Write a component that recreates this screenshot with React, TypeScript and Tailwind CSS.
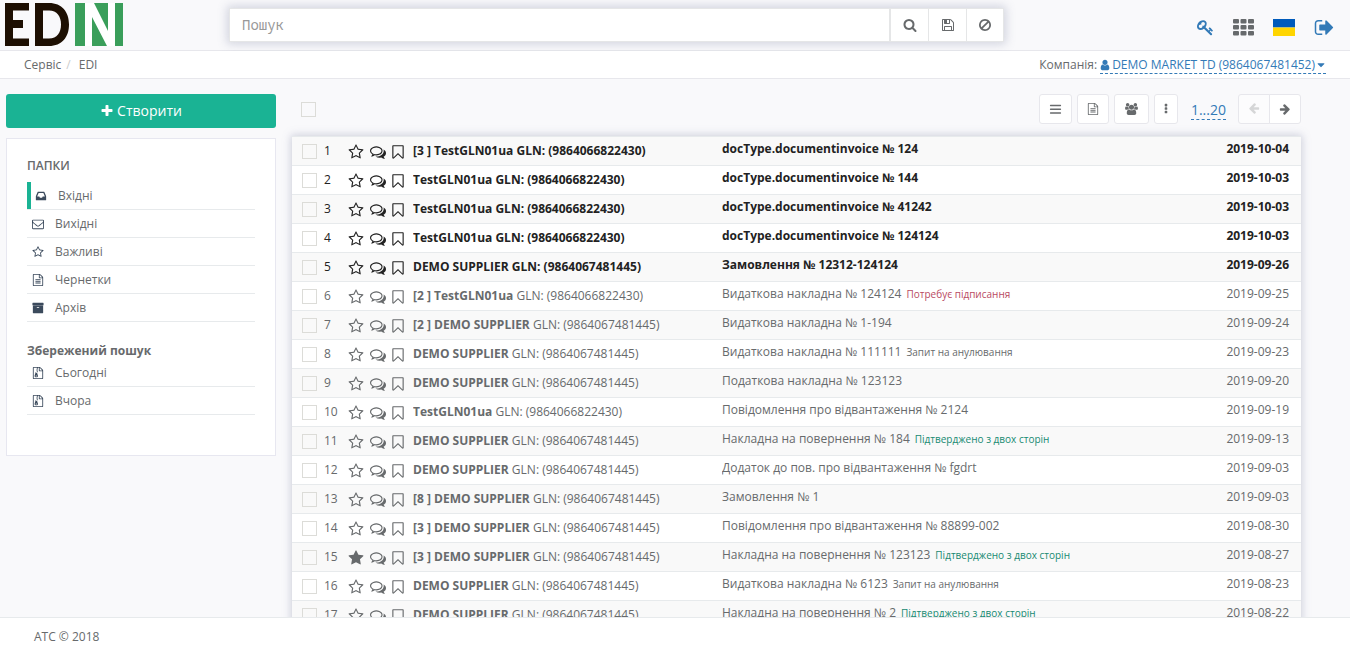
import React from 'react';

const ICONS: Record<string, string> = {
  star: 'M1728 647q0 22-26 48l-363 354 86 500q1 7 1 20 0 21-10.5 35.5t-30.5 14.5q-19 0-40-12l-449-236-449 236q-22 12-40 12-21 0-31.5-14.5t-10.5-35.5q0-6 2-20l86-500-364-354q-25-27-25-48 0-37 56-46l502-73 225-455q19-41 49-41t49 41l225 455 502 73q56 9 56 46z',
  starO: 'M1201 1004l306-297-422-62-189-382-189 382-422 62 306 297-73 421 378-199 377 199zM1728 647q0 22-26 48l-363 354 86 500q1 7 1 20 0 50-41 50-19 0-40-12l-449-236-449 236q-22 12-40 12-21 0-31.5-14.5t-10.5-35.5q0-6 2-20l86-500-364-354q-25-27-25-48 0-37 56-46l502-73 225-455q19-41 49-41t49 41l225 455 502 73q56 9 56 46z',
  comments: 'M704 384q-153 0-286 52t-211.5 141-78.5 191q0 82 53 158t149 132l97 56-35 84q34-20 62-39l44-31 53 10q78 14 153 14 153 0 286-52t211.5-141 78.5-191-78.5-191-211.5-141-286-52zm0-128q191 0 353.5 68.5t256.5 186.5 94 257-94 257-256.5 186.5-353.5 68.5q-86 0-176-16-124 88-278 128-36 9-86 16h-3q-11 0-20.5-8t-11.5-21q-1-3-1-6.5t.5-6.5 2-6l2.5-5 3.5-5.5 4-5 4.5-5 4-4.5q5-6 23-25t26-29.5 22.5-29 25-38.5 20.5-44q-124-72-195-177t-71-224q0-139 94-257t256.5-186.5 353.5-68.5zm822 1169q10 24 20.5 44t25 38.5 22.5 29 26 29.5 23 25q1 1 4 4.5t4.5 5 4 5 3.5 5.5l2.5 5 2 6 .5 6.5-1 6.5q-3 14-13 22t-22 7q-50-7-86-16-154-40-278-128-90 16-176 16-271 0-472-132 58 4 88 4 161 0 309-45t264-129q125-92 192-212t67-254q0-77-23-152 129 71 204 178t75 230q0 120-71 224.5t-195 176.5z',
  bookmark: 'M1408 256h-1024v1242l423-406 89-85 89 85 423 406v-1242zm12-128q23 0 44 9 33 13 52.5 41t19.5 62v1289q0 34-19.5 62t-52.5 41q-19 8-44 8-48 0-83-32l-441-424-441 424q-36 33-83 33-23 0-44-9-33-13-52.5-41t-19.5-62v-1289q0-34 19.5-62t52.5-41q21-9 44-9h1048z',
  search: 'M1216 832q0-185-131.5-316.5t-316.5-131.5-316.5 131.5-131.5 316.5 131.5 316.5 316.5 131.5 316.5-131.5 131.5-316.5zm512 832q0 52-38 90t-90 38q-54 0-90-38l-343-342q-179 124-399 124-143 0-273.5-55.5t-225-150-150-225-55.5-273.5 55.5-273.5 150-225 225-150 273.5-55.5 273.5 55.5 225 150 150 225 55.5 273.5q0 220-124 399l343 343q37 37 37 90z',
  floppy: 'M512 1536h768v-384h-768v384zm896 0h128v-896q0-14-10-38.5t-20-34.5l-281-281q-10-10-34-20t-39-10v416q0 40-28 68t-68 28h-576q-40 0-68-28t-28-68v-416h-128v1280h128v-416q0-40 28-68t68-28h832q40 0 68 28t28 68v416zm-384-928v-320q0-13-9.5-22.5t-22.5-9.5h-192q-13 0-22.5 9.5t-9.5 22.5v320q0 13 9.5 22.5t22.5 9.5h192q13 0 22.5-9.5t9.5-22.5zm640 32v928q0 40-28 68t-68 28h-1344q-40 0-68-28t-28-68v-1344q0-40 28-68t68-28h928q40 0 88 20t76 48l280 280q28 28 48 76t20 88z',
  ban: 'M1440 893q0-161-87-295l-754 753q137 89 297 89 111 0 211.5-43.5t173.5-116.5 116-174.5 43-212.5zm-999 299l755-754q-135-91-300-91-148 0-273 73t-198 199-73 274q0 162 89 299zm1223-299q0 157-61 300t-163.5 246-245 164-298.5 61-298.5-61-245-164-163.5-246-61-300 61-299.5 163.5-245.5 245-164 298.5-61 298.5 61 245 164 163.5 245.5 61 299.5z',
  key: 'M832 512q0-80-56-136t-136-56-136 56-56 136q0 42 19 83-41-19-83-19-80 0-136 56t-56 136 56 136 136 56 136-56 56-136q0-42-19-83 41 19 83 19 80 0 136-56t56-136zm851 704q0 17-49 66t-66 49q-9 0-28.5-16t-36.5-33-38.5-40-24.5-26l-96 96 220 220q28 28 28 68 0 42-39 81t-81 39q-40 0-68-28l-671-671q-176 131-365 131-163 0-265.5-102.5t-102.5-265.5q0-160 95-313t248-248 313-95q163 0 265.5 102.5t102.5 265.5q0 189-131 365l355 355 96-96q-3-3-26-24.5t-40-38.5-33-36.5-16-28.5q0-17 49-66t66-49q13 0 23 10 6 6 46 44.5t82 79.5 86.5 86 73 78 28.5 41z',
  signOut: 'M704 1440q0 4 1 20t.5 26.5-3 23.5-10 19.5-20.5 6.5h-320q-119 0-203.5-84.5t-84.5-203.5v-704q0-119 84.5-203.5t203.5-84.5h320q13 0 22.5 9.5t9.5 22.5q0 4 1 20t.5 26.5-3 23.5-10 19.5-20.5 6.5h-320q-66 0-113 47t-47 113v704q0 66 47 113t113 47h312l11.5 1 11.5 3 8 5.5 7 9 2 13.5zm928-544q0 26-19 45l-544 544q-19 19-45 19t-45-19-19-45v-288h-448q-26 0-45-19t-19-45v-384q0-26 19-45t45-19h448v-288q0-26 19-45t45-19 45 19l544 544q19 19 19 45z',
  user: 'M1536 1399q0 109-62.5 187t-150.5 78h-854q-88 0-150.5-78t-62.5-187q0-85 8.5-160.5t31.5-152 58.5-131 94-89 134.5-34.5q131 128 313 128t313-128q76 0 134.5 34.5t94 89 58.5 131 31.5 152 8.5 160.5zm-256-887q0 159-112.5 271.5t-271.5 112.5-271.5-112.5-112.5-271.5 112.5-271.5 271.5-112.5 271.5 112.5 112.5 271.5z',
  caret: 'M1408 704q0 26-19 45l-448 448q-19 19-45 19t-45-19l-448-448q-19-19-19-45t19-45 45-19h896q26 0 45 19t19 45z',
  plus: 'M1600 736v192q0 40-28 68t-68 28h-416v416q0 40-28 68t-68 28h-192q-40 0-68-28t-28-68v-416h-416q-40 0-68-28t-28-68v-192q0-40 28-68t68-28h416v-416q0-40 28-68t68-28h192q40 0 68 28t28 68v416h416q40 0 68 28t28 68z',
  inbox: 'M1151 960h316q-1-3-2.5-8t-2.5-8l-212-496h-708l-212 496q-1 2-2.5 8t-2.5 8h316l95 192h320zm513 30v482q0 26-19 45t-45 19h-1408q-26 0-45-19t-19-45v-482q0-62 25-123l238-552q10-25 36.5-42t52.5-17h832q26 0 52.5 17t36.5 42l238 552q25 61 25 123z',
  envelope: 'M1664 1504v-768q-32 36-69 66-268 206-426 338-51 43-83 67t-86.5 48.5-102.5 24.5h-2q-48 0-102.5-24.5t-86.5-48.5-83-67q-158-132-426-338-37-30-69-66v768q0 13 9.5 22.5t22.5 9.5h1472q13 0 22.5-9.5t9.5-22.5zm0-1051v-24.5l-.5-13-3-12.5-5.5-9-9-7.5-14-2.5h-1472q-13 0-22.5 9.5t-9.5 22.5q0 168 147 284 193 152 401 317 6 5 35 29.5t46 37.5 44.5 31.5 50.5 27.5 43 9h2q20 0 43-9t50.5-27.5 44.5-31.5 46-37.5 35-29.5q208-165 401-317 54-43 100.5-115.5t46.5-131.5zm128-37v1088q0 66-47 113t-113 47h-1472q-66 0-113-47t-47-113v-1088q0-66 47-113t113-47h1472q66 0 113 47t47 113z',
  fileText: 'M1596 380q28 28 48 76t20 88v1152q0 40-28 68t-68 28h-1344q-40 0-68-28t-28-68v-1600q0-40 28-68t68-28h896q40 0 88 20t76 48zm-444-244v376h376q-10-29-22-41l-313-313q-12-12-41-22zm384 1528v-1024h-416q-40 0-68-28t-28-68v-416h-768v1536h1280zM512 768h768v128h-768zM512 1024h768v128h-768zM512 1280h768v128h-768z',
  fileZip: 'M1596 380q28 28 48 76t20 88v1152q0 40-28 68t-68 28h-1344q-40 0-68-28t-28-68v-1600q0-40 28-68t68-28h896q40 0 88 20t76 48zm-444-244v376h376q-10-29-22-41l-313-313q-12-12-41-22zm384 1528v-1024h-416q-40 0-68-28t-28-68v-416h-128v128h-128v-128h-512v1536h1280zM640 256h128v128h-128zM768 384h128v128h-128zM640 512h128v128h-128zM768 640h128v128h-128zM781 943l107 349q8 27 8 52 0 83-72.500 137.500t-183.500 54.500-183.500-54.500-72.500-137.500q0-25 8-52 21-63 120-396v-128h128v128h79q22 0 39 13t23 34zm-141 465q53 0 90.500-19t37.500-45-37.500-45-90.500-19-90.500 19-37.500 45 37.500 45 90.500 19z',
  archive: 'M1088 832q0-26-19-45t-45-19h-256q-26 0-45 19t-19 45 19 45 45 19h256q26 0 45-19t19-45zm576-192v960q0 26-19 45t-45 19h-1408q-26 0-45-19t-19-45v-960q0-26 19-45t45-19h1408q26 0 45 19t19 45zm64-448v256q0 26-19 45t-45 19h-1536q-26 0-45-19t-19-45v-256q0-26 19-45t45-19h1536q26 0 45 19t19 45z',
  users: 'M593 896q-162 5-265 128h-134q-82 0-138-40.5t-56-118.5q0-353 124-353 6 0 43.5 21t97.5 42.5 119 21.5q67 0 133-23-5 37-5 66 0 139 81 256zm1071 637q0 120-73 189.5t-194 69.5h-874q-121 0-194-69.5t-73-189.5q0-53 3.5-103.5t14-109 26.5-108.5 43-97.5 62-81 85.5-53.5 111.5-20q10 0 43 21.5t73 48 107 48 135 21.5 135-21.5 107-48 73-48 43-21.5q61 0 111.5 20t85.5 53.5 62 81 43 97.5 26.5 108.5 14 109 3.5 103.5zm-1024-1277q0 106-75 181t-181 75-181-75-75-181 75-181 181-75 181 75 75 181zm704 384q0 159-112.5 271.5t-271.5 112.5-271.5-112.5-112.5-271.5 112.5-271.5 271.5-112.5 271.5 112.5 112.5 271.5zm576 225q0 78-56 118.5t-138 40.5h-134q-103-123-265-128 81-117 81-256 0-29-5-66 66 23 133 23 59 0 119-21.5t97.5-42.5 43.5-21q124 0 124 353zm-128-609q0 106-75 181t-181 75-181-75-75-181 75-181 181-75 181 75 75 181z',
  bars: 'M128 1344q0-64 64-64h1408q64 0 64 64v64q0 64-64 64h-1408q-64 0-64-64zM128 832q0-64 64-64h1408q64 0 64 64v64q0 64-64 64h-1408q-64 0-64-64zM128 320q0-64 64-64h1408q64 0 64 64v64q0 64-64 64h-1408q-64 0-64-64z',
  dots: 'M704 1248q0-96 96-96h192q96 0 96 96v192q0 96-96 96h-192q-96 0-96-96zM704 736q0-96 96-96h192q96 0 96 96v192q0 96-96 96h-192q-96 0-96-96zM704 224q0-96 96-96h192q96 0 96 96v192q0 96-96 96h-192q-96 0-96-96z',
  arrow: 'M1600 960q0 54-37 91l-651 651q-39 37-91 37-51 0-90-37l-75-75q-38-38-38-91t38-91l293-293h-704q-52 0-84.5-37.500t-32.500-90.500v-128q0-53 32.500-90.500t84.500-37.500h704l-293-294q-38-36-38-90t38-90l75-75q38-38 90-38 53 0 91 38l651 651q37 35 37 90z',
};

function Icon({ name, className = 'size-3.5' }: { name: string; className?: string }) {
  return (
    <svg viewBox={name === 'users' ? '0 0 1920 1792' : '0 0 1792 1792'} fill="currentColor" aria-hidden="true" className={`shrink-0 ${className}`}>
      <path d={ICONS[name]} />
    </svg>
  );
}

function GridIcon() {
  const cells = [0, 1, 2].flatMap((r) => [0, 1, 2].map((c) => ({ r, c })));
  return (
    <svg viewBox="0 0 21 17" fill="currentColor" aria-hidden="true" className="h-[17px] w-[21px]">
      {cells.map(({ r, c }) => (
        <rect key={`${r}${c}`} x={c * 7.5} y={r * 6} width="6" height="4.600" rx="1" />
      ))}
    </svg>
  );
}

function Logo() {
  return (
    <svg viewBox="0 0 119 43" className="h-[43px] w-[119px]" role="img" aria-label="EDIN">
      <path fill="#1d0f02" d="M0 0h24v7.500H8v9.500h10v8H8v10.500h16V43H0z" />
      <path fill="#1d0f02" fillRule="evenodd" d="M30 0h14c13 0 20 9 20 21.500S57 43 44 43H30zm8 7.500v28h6c8 0 12-6 12-14S52 7.500 44 7.500z" />
      <path fill="#3a9e5a" d="M70 0h48v43H70z" />
      <path fill="#fff" d="M80 0h9l14 28V0h7v43h-8L87 14v29h-7z" />
    </svg>
  );
}

type Row = {
  count?: number;
  name: string;
  gln: string;
  doc: string;
  status?: string;
  tone?: 'red' | 'gray' | 'green';
  date: string;
  unread?: boolean;
  starred?: boolean;
};

const A = '9864066822430';
const B = '9864067481445';

const ROWS: Row[] = [
  { count: 3, name: 'TestGLN01ua', gln: A, doc: 'docType.documentinvoice № 124', date: '2019-10-04', unread: true },
  { name: 'TestGLN01ua', gln: A, doc: 'docType.documentinvoice № 144', date: '2019-10-03', unread: true },
  { name: 'TestGLN01ua', gln: A, doc: 'docType.documentinvoice № 41242', date: '2019-10-03', unread: true },
  { name: 'TestGLN01ua', gln: A, doc: 'docType.documentinvoice № 124124', date: '2019-10-03', unread: true },
  { name: 'DEMO SUPPLIER', gln: B, doc: 'Замовлення № 12312-124124', date: '2019-09-26', unread: true },
  { count: 2, name: 'TestGLN01ua', gln: A, doc: 'Видаткова накладна № 124124', status: 'Потребує підписання', tone: 'red', date: '2019-09-25' },
  { count: 2, name: 'DEMO SUPPLIER', gln: B, doc: 'Видаткова накладна № 1-194', date: '2019-09-24' },
  { name: 'DEMO SUPPLIER', gln: B, doc: 'Видаткова накладна № 111111', status: 'Запит на анулювання', tone: 'gray', date: '2019-09-23' },
  { name: 'DEMO SUPPLIER', gln: B, doc: 'Податкова накладна № 123123', date: '2019-09-20' },
  { name: 'TestGLN01ua', gln: A, doc: 'Повідомлення про відвантаження № 2124', date: '2019-09-19' },
  { name: 'DEMO SUPPLIER', gln: B, doc: 'Накладна на повернення № 184', status: 'Підтверджено з двох сторін', tone: 'green', date: '2019-09-13' },
  { name: 'DEMO SUPPLIER', gln: B, doc: 'Додаток до пов. про відвантаження № fgdrt', date: '2019-09-03' },
  { count: 8, name: 'DEMO SUPPLIER', gln: B, doc: 'Замовлення № 1', date: '2019-09-03' },
  { count: 3, name: 'DEMO SUPPLIER', gln: B, doc: 'Повідомлення про відвантаження № 88899-002', date: '2019-08-30' },
  { count: 3, name: 'DEMO SUPPLIER', gln: B, doc: 'Накладна на повернення № 123123', status: 'Підтверджено з двох сторін', tone: 'green', date: '2019-08-27', starred: true },
  { name: 'DEMO SUPPLIER', gln: B, doc: 'Видаткова накладна № 6123', status: 'Запит на анулювання', tone: 'gray', date: '2019-08-23' },
  { name: 'DEMO SUPPLIER', gln: B, doc: 'Накладна на повернення № 2', status: 'Підтверджено з двох сторін', tone: 'green', date: '2019-08-22' },
];

const TONES = { red: 'text-[#b94a62]', gray: 'text-[#676a6c]', green: 'text-[#178a72]' };

const FOLDERS = [
  { icon: 'inbox', label: 'Вхідні', active: true },
  { icon: 'envelope', label: 'Вихідні' },
  { icon: 'starO', label: 'Важливі' },
  { icon: 'fileText', label: 'Чернетки' },
  { icon: 'archive', label: 'Архів' },
];

const SEARCHES = [
  { icon: 'fileZip', label: 'Сьогодні' },
  { icon: 'fileZip', label: 'Вчора' },
];

const CHECKBOX = 'block size-[15px] shrink-0 appearance-none border border-[#dcdcd8] bg-transparent checked:bg-[#1ab394]';
const TOOL = 'flex h-[30px] items-center justify-center rounded-[3px] border border-[#e7e7ec] bg-white';

function NavItem({ icon, label, active }: { icon: string; label: string; active?: boolean }) {
  return (
    <li className="border-b border-[#e7eaec]">
      <a href="#" className={`flex h-[27px] items-center gap-[11px] ${active ? 'border-l-4 border-[#1ab394] pl-1' : 'pl-[5px]'}`}>
        <Icon name={icon} className="size-3 text-[#3b4a5c]" />
        {label}
      </a>
    </li>
  );
}

function Sidebar() {
  return (
    <aside className="w-[270px] shrink-0">
      <button type="button" className="flex h-[34px] w-full items-center justify-center gap-[3px] rounded-[3px] bg-[#1ab394] text-sm text-white">
        <Icon name="plus" />
        Створити
      </button>
      <nav className="mt-2.5 border border-[#e7e7f0] bg-white px-5 pt-[18px] pb-10">
        <h2 className="leading-[18px] font-semibold">ПАПКИ</h2>
        <ul className="mt-[7px]">
          {FOLDERS.map((f) => (
            <NavItem key={f.label} {...f} />
          ))}
        </ul>
        <h2 className="mt-5 leading-[17px] font-bold">Збережений пошук</h2>
        <ul>
          {SEARCHES.map((f) => (
            <NavItem key={f.label} {...f} />
          ))}
        </ul>
      </nav>
    </aside>
  );
}

function Toolbar() {
  return (
    <div className="flex h-[30px] items-center">
      <input type="checkbox" aria-label="Вибрати все" className={`${CHECKBOX} ml-[9px]`} />
      <div className="ml-auto flex items-center gap-[5px]">
        <button type="button" aria-label="Список" className={`${TOOL} w-[33px]`}><Icon name="bars" className="size-[13px]" /></button>
        <button type="button" aria-label="Документ" className={`${TOOL} w-8`}><Icon name="fileText" className="size-3" /></button>
        <button type="button" aria-label="Користувачі" className={`${TOOL} w-[35px]`}><Icon name="users" className="h-3 w-[13px]" /></button>
        <button type="button" aria-label="Більше" className={`${TOOL} w-6`}><Icon name="dots" className="size-3" /></button>
      </div>
      <a href="#" className="ml-[13px] border-b border-dashed border-[#337ab7] pt-0.5 text-sm leading-[18px] text-[#337ab7]">1...20</a>
      <div className="ml-3 flex">
        <button type="button" disabled aria-label="Назад" className="flex h-[30px] w-8 items-center justify-center rounded-l-[3px] border border-[#e7e7ec] bg-[#fcfcfd] text-[#d5d6d7]">
          <Icon name="arrow" className="size-3 rotate-180" />
        </button>
        <button type="button" aria-label="Вперед" className="-ml-px flex h-[30px] w-8 items-center justify-center rounded-r-[3px] border border-[#e7e7ec] bg-white">
          <Icon name="arrow" className="size-3" />
        </button>
      </div>
    </div>
  );
}

function DocumentTable() {
  return (
    <table className="mt-3 w-full table-fixed border-separate border-spacing-0 bg-white shadow-[0_0_8px_1px_rgba(120,125,160,0.350)]">
      <colgroup>
        <col className="w-14" />
        <col className="w-[65px]" />
        <col className="w-[309px]" />
        <col />
        <col className="w-[90px]" />
      </colgroup>
      <tbody>
        {ROWS.map((row, i) => (
          <tr key={i} className={`h-[29px] odd:bg-[#f9f9f9] [&>td]:border-t [&>td]:border-[#e7eaec] ${row.unread ? 'text-[#222]' : ''}`}>
            <td className="p-0 pl-2.5">
              <label className="flex items-center gap-[7px]">
                <input type="checkbox" className={CHECKBOX} />
                {i + 1}
              </label>
            </td>
            <td className="p-0 pt-px">
              <div className="flex items-center">
                <Icon name={row.starred ? 'star' : 'starO'} className="mr-1.5 size-4" />
                <Icon name="comments" className="mr-1 size-4" />
                <Icon name="bookmark" className="size-4" />
              </div>
            </td>
            <td className="truncate p-0">
              <b>{row.count ? `[${row.count} ] ` : ''}{row.name}</b>{' '}
              <span className={row.unread ? 'font-bold' : ''}>GLN: ({row.gln})</span>
            </td>
            <td className={`truncate p-0 pb-1 ${row.unread ? 'font-bold' : ''}`}>
              {row.doc}
              {row.status && <span className={`ml-[5px] text-[10px] ${TONES[row.tone ?? 'gray']}`}>{row.status}</span>}
            </td>
            <td className={`p-0 pr-3 pb-1 text-right ${row.unread ? 'font-bold' : ''}`}>{row.date}</td>
          </tr>
        ))}
      </tbody>
    </table>
  );
}

export default function App() {
  return (
    <div className="flex h-screen flex-col bg-[#f9f9fb] font-['Open_Sans','Noto_Sans',sans-serif] text-xs text-[#676a6c]">
      <header className="flex h-[51px] shrink-0 items-center border-b border-[#e7e7ec] pr-[15px] pl-[5px]">
        <a href="#" className="self-start pt-[3px]"><Logo /></a>
        <form className="ml-[105px] flex h-[34px] w-[775px] shadow-[0_0_9px_2px_rgba(120,125,160,0.300)]">
          <input
            type="text"
            aria-label="Пошук"
            placeholder="Пошук"
            className="min-w-0 flex-1 border border-[#e5e6e7] bg-white px-3 font-['Noto_Sans_Mono','Liberation_Mono',monospace] text-sm outline-none placeholder:text-[#999]"
          />
          <button type="button" aria-label="Шукати" className="flex w-[39px] items-center justify-center border border-[#e5e6e7] bg-white"><Icon name="search" /></button>
          <button type="button" aria-label="Зберегти" className="flex w-[38px] items-center justify-center border border-l-0 border-[#e5e6e7] bg-white"><Icon name="floppy" /></button>
          <button type="button" aria-label="Очистити" className="flex w-[37px] items-center justify-center border border-l-0 border-[#e5e6e7] bg-white"><Icon name="ban" /></button>
        </form>
        <div className="ml-auto flex items-center gap-[19px] pt-1">
          <a href="#" aria-label="Ключ" className="text-[#337ab7]"><Icon name="key" className="size-[17px]" /></a>
          <a href="#" aria-label="Сервіси"><GridIcon /></a>
          <button type="button" aria-label="Українська">
            <svg viewBox="0 0 22 17" className="h-[17px] w-[22px]" aria-hidden="true">
              <rect width="22" height="8.500" fill="#005bbb" />
              <rect y="8.500" width="22" height="8.500" fill="#ffd500" />
            </svg>
          </button>
          <a href="#" aria-label="Вийти" className="text-[#337ab7]"><Icon name="signOut" className="size-[21px]" /></a>
        </div>
      </header>

      <div className="flex h-7 shrink-0 items-center justify-between border-b border-[#e7e7ec] bg-white pr-6 pl-6">
        <nav className="flex gap-[5px]">
          <a href="#">Сервіс</a>
          <span className="text-[#ccc]">/</span>
          <a href="#" className="ml-[3px]">EDI</a>
        </nav>
        <div className="flex items-center gap-[3px]">
          <span>Компанія:</span>
          <a href="#" className="flex items-center border-b border-dashed border-[#337ab7] pt-px text-[#337ab7]">
            <Icon name="user" className="mr-px -ml-px size-3" />
            DEMO MARKET TD (9864067481452)
            <Icon name="caret" className="-mr-px size-3" />
          </a>
        </div>
      </div>

      <main className="flex min-h-0 flex-1 items-start gap-4 overflow-y-auto pt-[15px] pr-[49px] pl-1.5 [scrollbar-width:none]">
        <Sidebar />
        <section className="min-w-0 flex-1">
          <Toolbar />
          <DocumentTable />
        </section>
      </main>

      <footer className="flex h-[35px] shrink-0 items-center border-t border-[#e7eaec] bg-white px-[34px] pt-[3px]">ATC © 2018</footer>
    </div>
  );
}
